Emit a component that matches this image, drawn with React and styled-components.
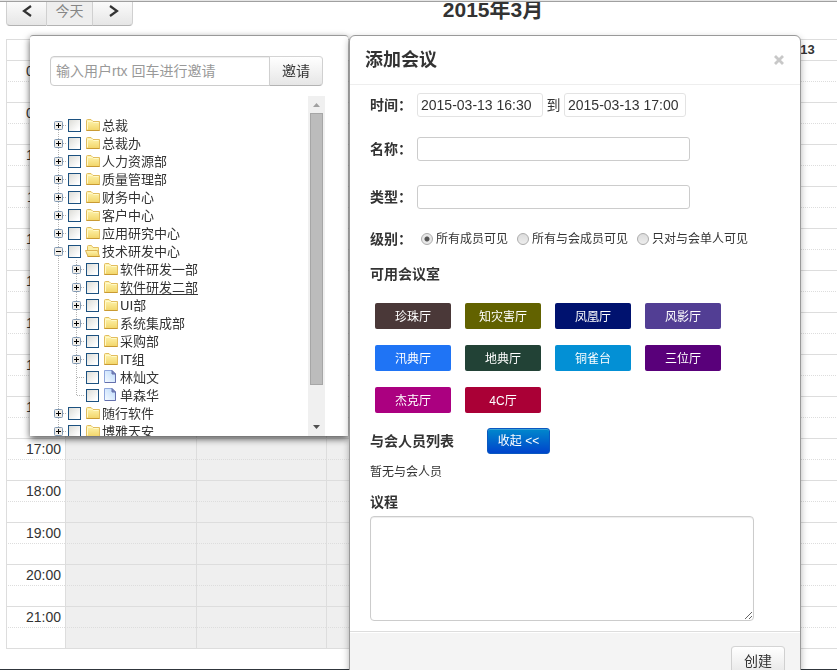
import React, { useState } from "react";
import styled, { createGlobalStyle, css } from "styled-components";

const GlobalStyle = createGlobalStyle`
  *, *::before, *::after { box-sizing: border-box; }
  body {
    margin: 0;
    overflow: hidden;
    background: #fff;
    color: #333;
    font: 14px/20px "Liberation Sans", "Noto Sans CJK SC", sans-serif;
  }
  button, input, textarea { font: inherit; color: inherit; margin: 0; }
`;

const Page = styled.div`
  height: 100vh;
  overflow: hidden;
  border-bottom: 1px solid #30363c;
`;

const TopEdge = styled.div`
  position: fixed;
  inset: 0 0 auto;
  height: 2px;
  background: #e6e6e6;
  border-bottom: 1px solid #a0a0a0;
`;

/* ---------- calendar ---------- */

const Calendar = styled.main`
  width: 116%;
  min-width: 974px;
  margin: -4px 0 0 6px;
`;

const CalendarHeader = styled.header`
  display: grid;
  grid-template-columns: 1fr auto 1fr;
  align-items: start;
  height: 43px;
`;

const CalendarTitle = styled.h2`
  margin: 0;
  font-size: 21px;
  line-height: 28px;
`;

const raised = css`
  border: 1px solid #ccc;
  border-color: #d4d4d4 #d0d0d0 #b3b3b3;
  background: linear-gradient(#fff, #e6e6e6);
`;

const NavGroup = styled.div`
  display: flex;
`;

const NavButton = styled.button`
  ${raised}
  display: flex;
  align-items: center;
  justify-content: center;
  width: ${(p) => (p.$first ? 41 : 40)}px;
  height: 30px;
  padding: 0;
  border-left-width: ${(p) => (p.$first ? 1 : 0)}px;
  border-radius: ${(p) => (p.$first ? "4px 0 0 4px" : "0 4px 4px 0")};
`;

const TodayButton = styled(NavButton)`
  width: 46px;
  border-radius: 0;
  background: #eee;
  color: #858585;
`;

const Grid = styled.table`
  width: 100%;
  table-layout: fixed;
  border-spacing: 0;
  border-right: 1px solid #ddd;
  border-bottom: 1px solid #ddd;
`;

const AxisColumn = styled.col`
  width: 59px;
`;

const SlotRow = styled.tr`
  height: 21px;
  > * {
    padding: 0;
    border-left: 1px solid #ddd;
    border-top: 1px ${(p) => (p.$half ? "dotted" : "solid")} #ddd;
  }
`;

const DayHead = styled.th`
  font-size: 13px;
  line-height: 20px;
`;

const Hour = styled.th`
  font-weight: 400;
  line-height: 20px;
  text-align: right;
  && { padding-right: 4px; }
`;

const Slot = styled.td`
  background: ${(p) => (p.$past ? "#efefef" : "#fff")};
`;

/* ---------- overlays ---------- */

const Overlay = styled.div`
  position: fixed;
  top: 35px;
  left: 30px;
  display: flex;
  align-items: flex-start;
  gap: 1px;
`;

const Invite = styled.aside`
  display: flex;
  flex-direction: column;
  width: 318px;
  height: 401px;
  padding: 20px 23px 0 20px;
  background: #fff;
  border-top: 1px solid #999;
  border-radius: 3px 3px 0 0;
  box-shadow: 0 3px 7px rgba(0, 0, 0, 0.65);
`;

const InviteForm = styled.form`
  display: flex;
  flex: none;
  margin-right: 2px;
`;

const InviteInput = styled.input`
  flex: 1;
  min-width: 0;
  height: 30px;
  padding: 2px 5px;
  border: 1px solid #ccc;
  border-radius: 4px 0 0 4px;
  box-shadow: inset 0 1px 1px rgba(0, 0, 0, 0.075);
  &::placeholder { color: #999; opacity: 1; }
`;

const InviteButton = styled.button`
  ${raised}
  width: 54px;
  height: 30px;
  padding: 0;
  margin-left: -1px;
  border-radius: 0 4px 4px 0;
`;

const TreeViewport = styled.div`
  display: flex;
  flex: 1;
  min-height: 0;
  margin-top: 10px;
  overflow: hidden;
`;

const Tree = styled.ul`
  flex: 1;
  margin: 0;
  padding: 20px 0 0;
  list-style: none;
`;

const TreeRow = styled.li`
  display: flex;
  align-items: center;
  height: 18px;
  margin-left: -1px;
`;

const Toggle = styled.button`
  flex: none;
  width: 18px;
  height: 18px;
  padding: 0;
  border: 0;
  background: none;
  svg { display: block; }
`;

const Guide = styled.svg`
  flex: none;
`;

const TreeLabel = styled.label`
  display: flex;
  align-items: center;
  gap: 4px;
  margin-left: 1px;
  font: 13px/18px "DejaVu Sans", "Noto Sans CJK SC", sans-serif;
  svg { flex: none; }
`;

const TreeName = styled.span`
  margin-left: -3px;
  padding-top: 1px;
  text-decoration: ${(p) => (p.$active ? "underline" : "none")};
  text-underline-offset: 2px;
`;

const Check = styled.input`
  appearance: none;
  flex: none;
  width: 13px;
  height: 13px;
  border: 1px solid #1c5180;
  background: linear-gradient(135deg, #dcdcd7, #fff 85%);
  &:checked { background: #1c5180; box-shadow: inset 0 0 0 2px #fff; }
`;

const ScrollTrack = styled.div`
  display: flex;
  flex-direction: column;
  align-items: center;
  width: 17px;
  background: #f0f0f0;
`;

const ScrollArrow = styled.button`
  flex: none;
  width: 17px;
  height: 17px;
  padding: 0;
  border: 0;
  background: none;
  color: ${(p) => p.$tone};
  svg { display: block; }
`;

const ScrollThumb = styled.div`
  flex: 0 1 272px;
  width: 13px;
  margin-bottom: auto;
  border: 1px solid #a6a6a6;
  background: #bcbcbc;
`;

const Modal = styled.section`
  width: 452px;
  background: #fff;
  border: 1px solid #999;
  border-radius: 6px;
  box-shadow: 0 3px 7px rgba(0, 0, 0, 0.3);
`;

const ModalHeader = styled.header`
  display: flex;
  align-items: center;
  justify-content: space-between;
  height: 49px;
  padding: 0 16px 0 15px;
  border-bottom: 1px solid #eee;
`;

const ModalTitle = styled.h3`
  margin: 0;
  font-size: 18px;
  line-height: 28px;
`;

const CloseButton = styled.button`
  width: 10px;
  height: 16px;
  padding: 0;
  border: 0;
  background: none;
  svg { display: block; }
`;

const ModalBody = styled.form`
  padding: 8px 46px 10px 20px;
`;

const Field = styled.div`
  display: flex;
  align-items: center;
  min-height: 24px;
  margin-bottom: ${(p) => p.$after}px;
`;

const FieldLabel = styled.label`
  flex: none;
  width: 47px;
  font-weight: 700;
  white-space: nowrap;
`;

const TextField = styled.input`
  width: 273px;
  height: 24px;
  padding: 2px 4px;
  border: 1px solid #ccc;
  border-radius: 3px;
`;

const TimeField = styled(TextField)`
  width: ${(p) => (p.$start ? 126 : 122)}px;
  padding: 2px 3px;
  border-color: #e3e3e3;
`;

const Until = styled.span`
  width: 21px;
  text-align: center;
`;

const RadioGroup = styled.div`
  display: flex;
  gap: 9px;
  padding-left: 4px;
`;

const RadioLabel = styled.label`
  display: flex;
  align-items: center;
  gap: 3px;
  font-size: 12px;
  line-height: 22px;
  white-space: nowrap;
`;

const Radio = styled.input`
  appearance: none;
  width: 12px;
  height: 12px;
  border: 1px solid #acacac;
  border-radius: 50%;
  background: linear-gradient(#dcdcdc, #ededed);
  &:checked { background: radial-gradient(circle, #555 0 2px, #e8e8e8 3px); }
`;

const SubHead = styled.h4`
  margin: 0;
  font-size: 14px;
  line-height: 20px;
`;

const Rooms = styled.div`
  display: grid;
  grid-template-columns: repeat(auto-fill, 76px);
  gap: 16px 14px;
  margin: 19px 0 15px;
  padding-left: 5px;
`;

const Room = styled.button`
  height: 26px;
  padding: 2px 0 0;
  border: 0;
  border-radius: 2px;
  background: ${(p) => p.$color};
  color: #fff;
  font-size: 12px;
`;

const Attendees = styled.div`
  display: flex;
  align-items: center;
  gap: 33px;
`;

const FoldButton = styled.button`
  width: 63px;
  height: 26px;
  padding: 0;
  border: 1px solid #0a58c0;
  border-radius: 3px;
  background: linear-gradient(#0088cc, #0044cc);
  box-shadow: inset 0 1px 0 rgba(255, 255, 255, 0.2);
  color: #fff;
  font-size: 12px;
`;

const Note = styled.p`
  margin: 8px 0 10px;
  font-size: 12px;
  line-height: 20px;
`;

const AgendaLabel = styled.label`
  display: block;
  margin-bottom: 4px;
  font-weight: 700;
`;

const Agenda = styled.textarea`
  display: block;
  width: 100%;
  height: 105px;
  padding: 4px 6px;
  border: 1px solid #ccc;
  border-radius: 4px;
  box-shadow: inset 0 1px 1px rgba(0, 0, 0, 0.075);
`;

const ModalFooter = styled.footer`
  display: flex;
  justify-content: flex-end;
  padding: 14px 15px 15px;
  border-top: 1px solid #ddd;
  background: #f4f4f4;
  box-shadow: inset 0 1px 0 #fff;
`;

const CreateButton = styled.button`
  ${raised}
  width: 54px;
  height: 30px;
  padding: 0;
  border-radius: 4px;
`;

/* ---------- drawings ---------- */

const Chevron = ({ d }) => (
  <svg width="12" height="14" viewBox="0 0 12 14" fill="none" stroke="#333" strokeWidth="2.2">
    <path d={d} />
  </svg>
);

const CloseIcon = () => (
  <svg width="10" height="10" viewBox="0 0 10 10" fill="none" stroke="#c8c8c8" strokeWidth="2.8">
    <path d="M1 1L9 9M9 1L1 9" />
  </svg>
);

const dots = { stroke: "#b4b4b4", strokeDasharray: "1 1" };

const SwitchIcon = ({ first, last, open, leaf }) => (
  <svg width="18" height="18" viewBox="0 0 18 18">
    {!first && <path d="M9.5 0V9" {...dots} />}
    {!last && <path d="M9.5 10V18" {...dots} />}
    <path d="M10 9.5H18" {...dots} />
    {!leaf && (
      <>
        <rect x="5.5" y="5.5" width="8" height="8" rx="1" fill="#f1eee9" stroke="#8199b3" />
        <path d="M7 9.5H12" stroke="#000" />
        {!open && <path d="M9.5 7V12" stroke="#000" />}
      </>
    )}
  </svg>
);

const FolderIcon = () => (
  <svg width="16" height="16" viewBox="0 0 16 16">
    <path d="M1.5 3.5Q1.5 2.5 2.5 2.5H6L8 4.5H14.5V13.5H1.5Z" fill="url(#folderFill)" stroke="#e2bd5e" />
    <path d="M1.5 13.5H14.5" stroke="#c99a32" />
    <path d="M2.5 12.5V4.5H7.5L8.5 5.5H13.5" fill="none" stroke="#fff9c8" />
  </svg>
);

const OpenFolderIcon = () => (
  <svg width="16" height="16" viewBox="0 0 16 16">
    <path d="M2.5 12V3.5Q2.5 2.5 3.5 2.5H6.5L8 4.5H13.5V12" fill="#fbf0a8" stroke="#e2bd5e" />
    <path d="M0.5 7.5H12.5L14.5 13.5H3Z" fill="url(#folderFill)" stroke="#dcb353" />
    <path d="M2.5 13.5H14.5" stroke="#c99a32" />
  </svg>
);

const DocIcon = () => (
  <svg width="16" height="16" viewBox="0 0 16 16">
    <path d="M1.5 1.5H9L12.5 5V13.5H1.5Z" fill="url(#docFill)" stroke="#8fa6dc" />
    <path d="M9 1.5V5H12.5Z" fill="#7c89bd" stroke="#6570ac" />
    <path d="M12.5 5V13.5H2" fill="none" stroke="#6570ac" />
  </svg>
);

const IconDefs = () => (
  <svg width="0" height="0" aria-hidden="true" display="block">
    <defs>
      <linearGradient id="folderFill" x1="0" y1="0" x2="0" y2="1">
        <stop offset="0" stopColor="#fff6b4" />
        <stop offset="1" stopColor="#f2d568" />
      </linearGradient>
      <linearGradient id="docFill" x1="1" y1="0" x2="0" y2="1">
        <stop offset="0" stopColor="#b9d8fb" />
        <stop offset="1" stopColor="#f8fcff" />
      </linearGradient>
    </defs>
  </svg>
);

/* ---------- data ---------- */

const days = ["周日 03/08", "周一 03/09", "周二 03/10", "周三 03/11", "周四 03/12", "周五 03/13", "周六 03/14"];
const hours = Array.from({ length: 14 }, (_, i) => `${String(i + 8).padStart(2, "0")}:00`);

const nodes = [
  { name: "总裁", first: true },
  { name: "总裁办" },
  { name: "人力资源部" },
  { name: "质量管理部" },
  { name: "财务中心" },
  { name: "客户中心" },
  { name: "应用研究中心" },
  { name: "技术研发中心", open: true },
  { name: "软件研发一部", child: true },
  { name: "软件研发二部", child: true, active: true },
  { name: "UI部", child: true },
  { name: "系统集成部", child: true },
  { name: "采购部", child: true },
  { name: "IT组", child: true },
  { name: "林灿文", child: true, leaf: true },
  { name: "单森华", child: true, leaf: true, last: true },
  { name: "随行软件" },
  { name: "博雅天安" },
];

const rooms = [
  ["珍珠厅", "#4a3838"],
  ["知灾害厅", "#626200"],
  ["凤凰厅", "#00126f"],
  ["风影厅", "#523e94"],
  ["汛典厅", "#1f74f5"],
  ["地典厅", "#224236"],
  ["铜雀台", "#0390d5"],
  ["三位厅", "#59007a"],
  ["杰克厅", "#ab0080"],
  ["4C厅", "#aa0036"],
];

const visibility = ["所有成员可见", "所有与会成员可见", "只对与会单人可见"];

function TreeNode({ node }) {
  const Icon = node.leaf ? DocIcon : node.open ? OpenFolderIcon : FolderIcon;
  return (
    <TreeRow>
      {node.child && (
        <Guide width="18" height="18">
          <path d="M9.5 0V18" {...dots} />
        </Guide>
      )}
      <Toggle type="button" aria-label={node.name}>
        <SwitchIcon {...node} />
      </Toggle>
      <TreeLabel>
        <Check type="checkbox" />
        <Icon />
        <TreeName $active={node.active}>{node.name}</TreeName>
      </TreeLabel>
    </TreeRow>
  );
}

export default function App() {
  const [level, setLevel] = useState(visibility[0]);
  return (
    <Page>
      <GlobalStyle />
      <Calendar>
        <CalendarHeader>
          <NavGroup>
            <NavButton $first aria-label="上一周"><Chevron d="M10 2L3 7L10 12" /></NavButton>
            <TodayButton disabled>今天</TodayButton>
            <NavButton aria-label="下一周"><Chevron d="M3 2L10 7L3 12" /></NavButton>
          </NavGroup>
          <CalendarTitle>2015年3月</CalendarTitle>
        </CalendarHeader>
        <Grid>
          <colgroup>
            <AxisColumn />
            {days.map((d) => <col key={d} />)}
          </colgroup>
          <thead>
            <SlotRow>
              <Hour />
              {days.map((d) => <DayHead key={d}>{d}</DayHead>)}
            </SlotRow>
          </thead>
          <tbody>
            {hours.flatMap((h) => [false, true].map((half) => (
              <SlotRow key={h + half} $half={half}>
                <Hour>{half ? "" : h}</Hour>
                {days.map((d, i) => <Slot key={d} $past={i < 5} />)}
              </SlotRow>
            )))}
          </tbody>
        </Grid>
      </Calendar>
      <TopEdge />

      <Overlay>
        <Invite>
          <IconDefs />
          <InviteForm>
            <InviteInput aria-label="邀请用户" placeholder="输入用户rtx 回车进行邀请" />
            <InviteButton type="button">邀请</InviteButton>
          </InviteForm>
          <TreeViewport>
            <Tree>{nodes.map((n) => <TreeNode key={n.name} node={n} />)}</Tree>
            <ScrollTrack>
              <ScrollArrow type="button" aria-label="向上滚动" $tone="#a0a0a0">
                <svg width="17" height="17"><path d="M5 11H12L8.5 7Z" fill="currentColor" /></svg>
              </ScrollArrow>
              <ScrollThumb />
              <ScrollArrow type="button" aria-label="向下滚动" $tone="#505050">
                <svg width="17" height="17"><path d="M5 6H12L8.5 10Z" fill="currentColor" /></svg>
              </ScrollArrow>
            </ScrollTrack>
          </TreeViewport>
        </Invite>

        <Modal role="dialog" aria-labelledby="dialog-title">
          <ModalHeader>
            <ModalTitle id="dialog-title">添加会议</ModalTitle>
            <CloseButton type="button" aria-label="关闭"><CloseIcon /></CloseButton>
          </ModalHeader>
          <ModalBody>
            <Field $after={20}>
              <FieldLabel htmlFor="start">时间：</FieldLabel>
              <TimeField id="start" $start defaultValue="2015-03-13 16:30" />
              <Until>到</Until>
              <TimeField aria-label="结束时间" defaultValue="2015-03-13 17:00" />
            </Field>
            <Field $after={24}>
              <FieldLabel htmlFor="name">名称：</FieldLabel>
              <TextField id="name" />
            </Field>
            <Field $after={18}>
              <FieldLabel htmlFor="type">类型：</FieldLabel>
              <TextField id="type" />
            </Field>
            <Field $after={13}>
              <FieldLabel as="span" id="level">级别：</FieldLabel>
              <RadioGroup role="radiogroup" aria-labelledby="level">
                {visibility.map((v) => (
                  <RadioLabel key={v}>
                    <Radio type="radio" name="level" checked={level === v} onChange={() => setLevel(v)} />
                    {v}
                  </RadioLabel>
                ))}
              </RadioGroup>
            </Field>
            <SubHead>可用会议室</SubHead>
            <Rooms>
              {rooms.map(([name, color]) => <Room key={name} type="button" $color={color}>{name}</Room>)}
            </Rooms>
            <Attendees>
              <SubHead>与会人员列表</SubHead>
              <FoldButton type="button">收起 &lt;&lt;</FoldButton>
            </Attendees>
            <Note>暂无与会人员</Note>
            <AgendaLabel htmlFor="agenda">议程</AgendaLabel>
            <Agenda id="agenda" />
          </ModalBody>
          <ModalFooter>
            <CreateButton type="button">创建</CreateButton>
          </ModalFooter>
        </Modal>
      </Overlay>
    </Page>
  );
}
